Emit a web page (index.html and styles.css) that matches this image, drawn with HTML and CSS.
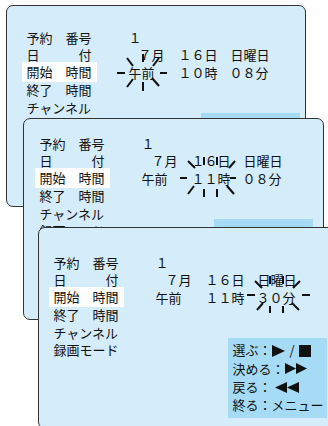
FILE: index.html
```html
<!DOCTYPE html>
<html lang="ja">
<head>
<meta charset="utf-8">
<link rel="stylesheet" href="styles.css">
</head>
<body>
<div class="stage">
  <section class="panel p1">
    <div class="content">
      <div class="row"><span class="lbl">予約　番号</span><span class="c1">１</span></div>
      <div class="row"><span class="lbl">日　　　付</span><span class="c1 month">７月</span><span class="c2">１６日</span><span class="c3 wd">日曜日</span></div>
      <div class="row"><span class="lbl sel">開始　時間</span><span class="c1">午前</span><span class="c2">１０時</span><span class="c3">０８分</span></div>
      <div class="row"><span class="lbl">終了　時間</span></div>
      <div class="row"><span class="lbl">チャンネル</span></div>
      <div class="row last"><span class="lbl">録画モード</span><div class="legend"></div></div>
    </div>
    <svg class="burst" width="300" height="202">
      <line x1="111" y1="68" x2="119" y2="68"/><line x1="154" y1="68" x2="161" y2="68"/>
      <line x1="121" y1="53" x2="127" y2="61"/><line x1="137" y1="49" x2="137" y2="57"/><line x1="153" y1="53" x2="147" y2="61"/>
      <line x1="127" y1="74" x2="121" y2="82"/><line x1="137" y1="77" x2="137" y2="86"/><line x1="146" y1="73" x2="153" y2="81"/>
    </svg>
  </section>

  <section class="panel p2">
    <div class="content">
      <div class="row"><span class="lbl">予約　番号</span><span class="c1">１</span></div>
      <div class="row"><span class="lbl">日　　　付</span><span class="c1 month">７月</span><span class="c2">１６日</span><span class="c3 wd">日曜日</span></div>
      <div class="row"><span class="lbl sel">開始　時間</span><span class="c1">午前</span><span class="c2">１１時</span><span class="c3">０８分</span></div>
      <div class="row"><span class="lbl">終了　時間</span></div>
      <div class="row"><span class="lbl">チャンネル</span></div>
      <div class="row last"><span class="lbl">録画モード</span><div class="legend"></div></div>
    </div>
    <svg class="burst" width="300" height="202">
      <line x1="157" y1="60" x2="164" y2="60"/><line x1="207" y1="60" x2="213" y2="60"/>
      <line x1="165" y1="43" x2="172" y2="50"/><line x1="212" y1="43" x2="206" y2="50"/>
      <line x1="181" y1="39" x2="181" y2="47"/><line x1="194" y1="39" x2="194" y2="47"/>
      <line x1="171" y1="68" x2="165" y2="76"/><line x1="181" y1="71" x2="181" y2="79"/>
      <line x1="194" y1="71" x2="194" y2="79"/><line x1="204" y1="68" x2="211" y2="76"/>
    </svg>
  </section>

  <section class="panel p3">
    <div class="content">
      <div class="row"><span class="lbl">予約　番号</span><span class="c1">１</span></div>
      <div class="row"><span class="lbl">日　　　付</span><span class="c1 month">７月</span><span class="c2">１６日</span><span class="c3 wd">日曜日</span></div>
      <div class="row"><span class="lbl sel">開始　時間</span><span class="c1">午前</span><span class="c2">１１時</span><span class="c3">３０分</span></div>
      <div class="row"><span class="lbl">終了　時間</span></div>
      <div class="row"><span class="lbl">チャンネル</span></div>
      <div class="row last"><span class="lbl">録画モード</span><div class="legend"><div class="lg">選ぶ：<svg class="ic" width="13" height="12" viewBox="0 0 13 12"><polygon points="0,0 13,6 0,12"/></svg><span class="slash">/</span><svg class="ic" width="12" height="12" viewBox="0 0 12 12"><rect x="0" y="0" width="12" height="12"/></svg></div><div class="lg">決める：<svg class="ic" width="22" height="11" viewBox="0 0 22 11"><polygon points="0,0 11,5.5 0,11"/><polygon points="11,0 22,5.5 11,11"/></svg></div><div class="lg">戻る：<svg class="ic rw" width="24" height="11" viewBox="0 0 24 11"><polygon points="12,0 0,5.5 12,11"/><polygon points="24,0 12,5.5 24,11"/></svg></div><div class="lg">終る：メニュー</div></div></div>
    </div>
    <svg class="burst" width="301" height="202">
      <line x1="209" y1="68" x2="217" y2="68"/><line x1="264" y1="68" x2="272" y2="68"/>
      <line x1="217" y1="54" x2="224" y2="61"/><line x1="262" y1="54" x2="255" y2="61"/>
      <line x1="232" y1="49" x2="232" y2="57"/><line x1="245" y1="49" x2="245" y2="57"/>
      <line x1="225" y1="76" x2="219" y2="83"/><line x1="232" y1="79" x2="232" y2="86"/>
      <line x1="245" y1="79" x2="245" y2="86"/><line x1="254" y1="76" x2="261" y2="83"/>
    </svg>
  </section>
</div>
</body>
</html>
```

FILE: styles.css
```css
html, body {
  margin: 0;
  padding: 0;
  background: #fff;
}

.stage {
  display: grid;
  width: 328px;
  height: 426px;
  overflow: hidden;
  font-family: "Noto Sans CJK JP", "Noto Sans", sans-serif;
  font-size: 13px;
  color: #111;
}

.panel {
  grid-area: 1 / 1;
  justify-self: start;
  align-self: start;
  position: relative;
  box-sizing: border-box;
  width: 300px;
  height: 202px;
  border: 1.5px solid #333;
  border-radius: 7px;
  background: #d5ecfa;
}

.p1 { margin: 5px 0 0 6px; }
.p2 { margin: 118px 0 0 23px; width: 301px; }
.p3 { margin: 227px 0 0 38px; width: 301px; }

.p1 .content { padding: 22.5px 0 0 19.5px; }
.p2 .content { padding: 15.5px 0 0 15.5px; }
.p3 .content { padding: 25.5px 0 0 14.5px; }

.row {
  display: flex;
  align-items: center;
  height: 17.6px;
  line-height: 17.6px;
  white-space: pre;
}

.row.last {
  align-items: flex-start;
  height: auto;
}

.lbl {
  flex: none;
  width: 102px;
}

.lbl.sel {
  box-sizing: border-box;
  width: 75px;
  height: 20px;
  line-height: 20px;
  margin-left: -5px;
  padding-left: 5px;
  margin-right: 32px;
  background: #fff;
}

.c1 { flex: none; width: 50px; }
.c2 { flex: none; width: 51px; }
.c3 { flex: none; }
.c1.month { box-sizing: border-box; padding-left: 10px; }
.c3.wd { margin-left: 1px; }

.legend {
  box-sizing: border-box;
  width: 99px;
  min-height: 80px;
  margin-left: 72px;
  margin-top: -3px;
  padding: 3px 0 2px 5px;
  background: #a6dbf5;
  line-height: 18.3px;
  white-space: normal;
}

.lg {
  display: flex;
  align-items: center;
  height: 18.3px;
  white-space: nowrap;
}

.ic {
  flex: none;
  fill: #111;
}

.rw { margin-left: 3px; }

.slash {
  margin: 0 4px 0 5px;
}

.burst {
  position: absolute;
  left: -1.5px;
  top: -1.5px;
  overflow: visible;
  stroke: #111;
  stroke-width: 2;
  pointer-events: none;
}
```
